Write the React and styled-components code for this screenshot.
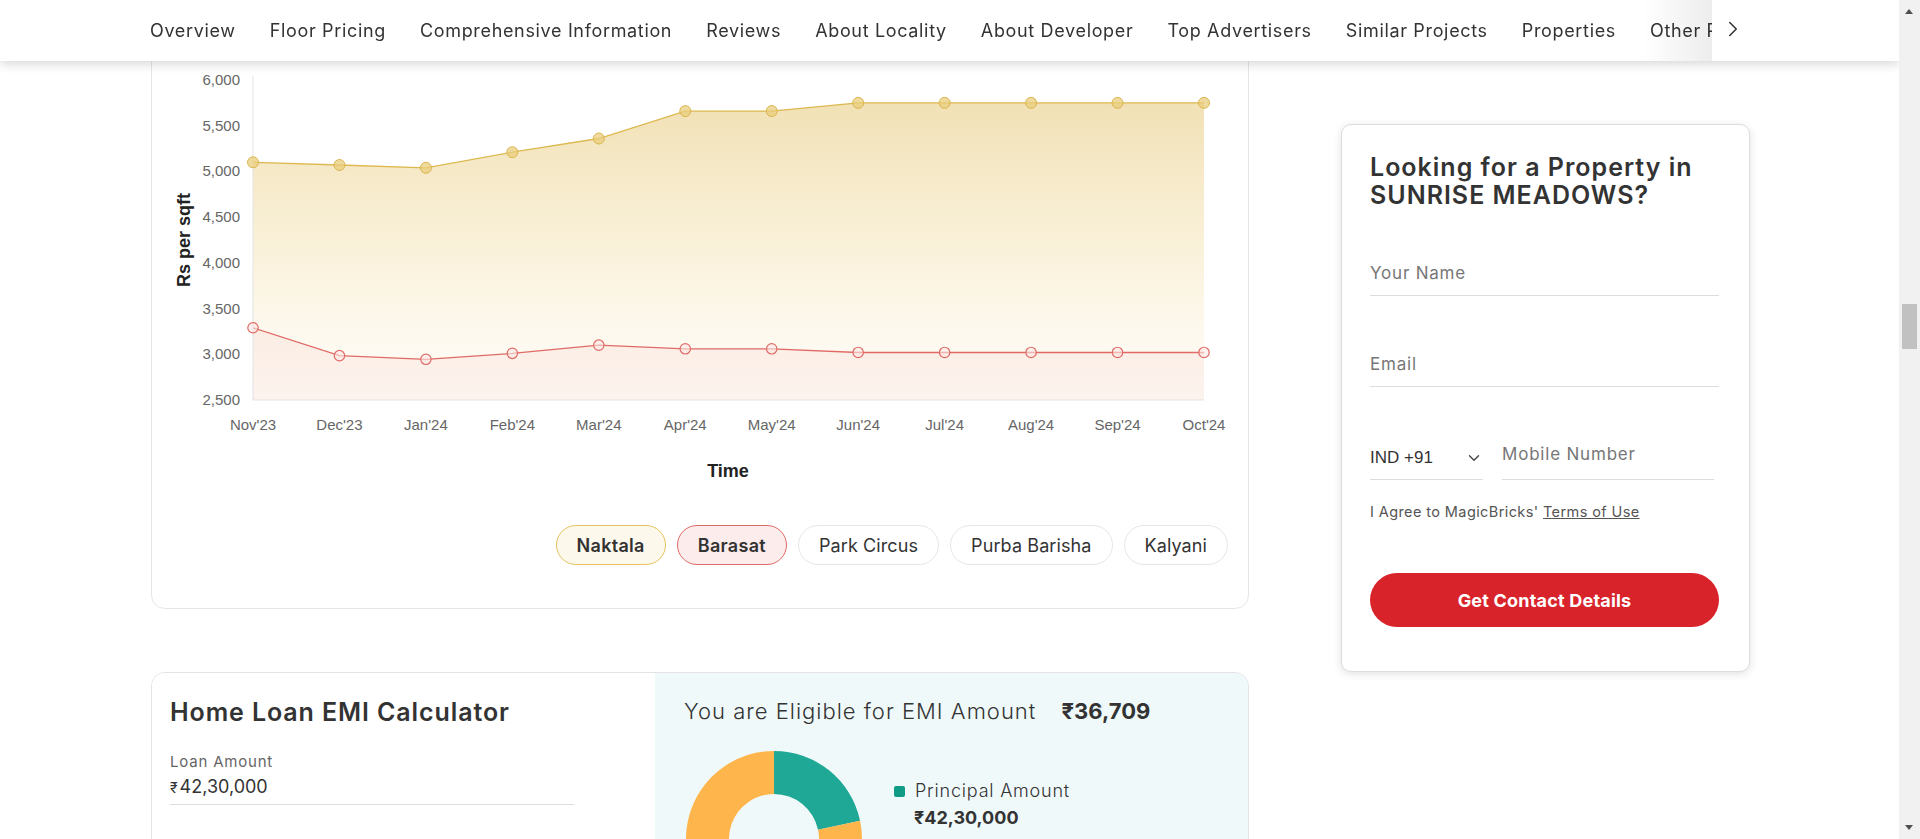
import React from 'react';
import styled, { createGlobalStyle } from 'styled-components';
import { ChevronRight, ChevronDown } from 'lucide-react';

const GlobalStyle = createGlobalStyle`
  * { box-sizing: border-box; }
  html, body { margin: 0; padding: 0; background: #fff; }
  body { font-family: Inter, "Open Sans", sans-serif; color: #333; }
`;

const navLinks = [
  'Overview', 'Floor Pricing', 'Comprehensive Information', 'Reviews', 'About Locality',
  'About Developer', 'Top Advertisers', 'Similar Projects', 'Properties', 'Other Projects',
];

const months = ["Nov'23", "Dec'23", "Jan'24", "Feb'24", "Mar'24", "Apr'24", "May'24", "Jun'24", "Jul'24", "Aug'24", "Sep'24", "Oct'24"];
const naktala = [5100, 5070, 5040, 5210, 5360, 5660, 5660, 5750, 5750, 5750, 5750, 5750];
const barasat = [3290, 2985, 2945, 3010, 3100, 3060, 3060, 3020, 3020, 3020, 3020, 3020];
const ticks = [6000, 5500, 5000, 4500, 4000, 3500, 3000, 2500];

const localities = [
  { name: 'Naktala', tone: 'yellow' },
  { name: 'Barasat', tone: 'red' },
  { name: 'Park Circus' },
  { name: 'Purba Barisha' },
  { name: 'Kalyani' },
];

// chart geometry (svg coords)
const X0 = 101;
const X1 = 1052;
const Y0 = 69;
const Y1 = 389;
const px = (i) => X0 + (i * (X1 - X0)) / (months.length - 1);
const py = (v) => Y0 + ((6000 - v) / 3500) * (Y1 - Y0);

const linePath = (data) => data.map((v, i) => `${i ? 'L' : 'M'}${px(i).toFixed(1)},${py(v).toFixed(1)}`).join(' ');
const areaPath = (data) => `${linePath(data)} L${X1},${Y1} L${X0},${Y1} Z`;

const polar = (cx, cy, r, a) => {
  const rad = (a * Math.PI) / 180;
  return [cx + r * Math.sin(rad), cy - r * Math.cos(rad)];
};
const slice = (cx, cy, r, R, a0, a1) => {
  const large = a1 - a0 > 180 ? 1 : 0;
  const [ox0, oy0] = polar(cx, cy, R, a0);
  const [ox1, oy1] = polar(cx, cy, R, a1);
  const [ix1, iy1] = polar(cx, cy, r, a1);
  const [ix0, iy0] = polar(cx, cy, r, a0);
  return `M${ox0},${oy0} A${R},${R} 0 ${large} 1 ${ox1},${oy1} L${ix1},${iy1} A${r},${r} 0 ${large} 0 ${ix0},${iy0} Z`;
};

function App() {
  return (
    <>
      <GlobalStyle />
      <Nav>
        <NavList>
          {navLinks.map((l) => (
            <NavItem key={l} href="#">{l}</NavItem>
          ))}
        </NavList>
        <NavArrow>
          <ChevronRight size={26} strokeWidth={1.4} color="#333" />
        </NavArrow>
      </Nav>

      <Page>
        <LeftCol>
          <ChartCard>
            <svg width="1096" height="480" viewBox="0 0 1096 480">
              <defs>
                <linearGradient id="gy" x1="0" y1={Y0} x2="0" y2={Y1} gradientUnits="userSpaceOnUse">
                  <stop offset="0" stopColor="#efdcaa" stopOpacity="0.95" />
                  <stop offset="0.55" stopColor="#f8eccc" stopOpacity="0.7" />
                  <stop offset="1" stopColor="#fffaf0" stopOpacity="0.4" />
                </linearGradient>
                <linearGradient id="gr" x1="0" y1="250" x2="0" y2={Y1} gradientUnits="userSpaceOnUse">
                  <stop offset="0" stopColor="#f3c6c0" stopOpacity="0.3" />
                  <stop offset="1" stopColor="#f7dcd6" stopOpacity="0.3" />
                </linearGradient>
              </defs>
              {ticks.map((t) => (
                <AxisText key={t} x="88" y={py(t) + 5} textAnchor="end">{t.toLocaleString('en-US')}</AxisText>
              ))}
              {months.map((m, i) => (
                <AxisText key={m} x={px(i)} y="419" textAnchor="middle">{m}</AxisText>
              ))}
              <AxisTitle x="32" y="229" textAnchor="middle" dominantBaseline="central" transform="rotate(-90 32 229)">Rs per sqft</AxisTitle>
              <AxisTitle x="576" y="466" textAnchor="middle">Time</AxisTitle>

              <path d={areaPath(naktala)} fill="url(#gy)" />
              <path d={areaPath(barasat)} fill="url(#gr)" />
              <line x1={X0} y1={Y0 - 4} x2={X0} y2={Y1} stroke="#e3e3e3" />
              <line x1={X0} y1={Y1} x2={X1} y2={Y1} stroke="#e3e3e3" />
              <path d={linePath(naktala)} fill="none" stroke="#ddb84e" strokeWidth="1.3" />
              <path d={linePath(barasat)} fill="none" stroke="#e06a66" strokeWidth="1.3" />
              {naktala.map((v, i) => (
                <circle key={`n${i}`} cx={px(i)} cy={py(v)} r="5.5" fill="#e9cd7c" fillOpacity="0.75" stroke="#dbb54c" strokeWidth="1" />
              ))}
              {barasat.map((v, i) => (
                <circle key={`b${i}`} cx={px(i)} cy={py(v)} r="5.2" fill="#fbe7e4" fillOpacity="0.6" stroke="#e06a66" strokeWidth="1.2" />
              ))}
            </svg>
            <Chips>
              {localities.map((l) => (
                <Chip key={l.name} $tone={l.tone}>{l.name}</Chip>
              ))}
            </Chips>
          </ChartCard>

          <EmiCard>
            <EmiLeft>
              <EmiTitle>Home Loan EMI Calculator</EmiTitle>
              <FieldLabel>Loan Amount</FieldLabel>
              <AmountInput>
                <Rupee>₹</Rupee>42,30,000
              </AmountInput>
            </EmiLeft>
            <EmiRight>
              <Eligible>
                You are Eligible for EMI Amount <strong>₹36,709</strong>
              </Eligible>
              <DonutRow>
                <svg width="180" height="180" viewBox="0 0 180 180">
                  <path d={slice(90, 90, 45, 88, 0, 78)} fill="#1fa896" />
                  <path d={slice(90, 90, 45, 88, 78, 220)} fill="#feb54c" />
                  <path d={slice(90, 90, 45, 88, 220, 360)} fill="#feb54c" />
                </svg>
                <Legend>
                  <LegendLabel>
                    <Swatch $color="#0f9b86" />
                    Principal Amount
                  </LegendLabel>
                  <LegendValue>₹42,30,000</LegendValue>
                </Legend>
              </DonutRow>
            </EmiRight>
          </EmiCard>
        </LeftCol>

        <RightCol>
          <FormCard>
            <FormTitle>Looking for a Property in SUNRISE MEADOWS?</FormTitle>
            <Field $top={45}>Your Name</Field>
            <Field $top={49}>Email</Field>
            <PhoneRow>
              <CountrySelect>
                IND +91
                <ChevronDown size={18} strokeWidth={1.8} color="#444" />
              </CountrySelect>
              <MobileField>Mobile Number</MobileField>
            </PhoneRow>
            <Agree>
              I Agree to MagicBricks' <a href="#">Terms of Use</a>
            </Agree>
            <SubmitButton>Get Contact Details</SubmitButton>
          </FormCard>
        </RightCol>
      </Page>

      <ScrollTrack>
        <ScrollArrow $dir="up" />
        <ScrollThumb />
        <ScrollArrow $dir="down" />
      </ScrollTrack>
    </>
  );
}

export default App;

const Nav = styled.nav`
  position: fixed;
  top: 0;
  left: 0;
  right: 21px;
  height: 61px;
  background: #fff;
  box-shadow: 0 3px 10px rgba(0, 0, 0, 0.16);
  z-index: 10;
  display: flex;
  align-items: stretch;
  padding-left: 150px;
`;

const NavList = styled.div`
  flex: 1;
  display: flex;
  align-items: center;
  gap: 34px;
  white-space: nowrap;
  overflow: hidden;
`;

const NavItem = styled.a`
  font-size: 18px;
  letter-spacing: 0.66px;
  color: #333;
  text-decoration: none;
`;

const NavArrow = styled.div`
  position: relative;
  width: 187px;
  flex-shrink: 0;
  background: #fff;
  display: flex;
  align-items: center;
  padding-left: 8px;
  padding-bottom: 4px;

  &::before {
    content: '';
    position: absolute;
    left: -70px;
    top: 0;
    bottom: 0;
    width: 70px;
    background: linear-gradient(to right, rgba(0, 0, 0, 0), rgba(0, 0, 0, 0.07));
  }
`;

const ScrollTrack = styled.div`
  position: fixed;
  top: 0;
  right: 0;
  bottom: 0;
  width: 21px;
  background: #f1f1f1;
  z-index: 20;
`;

const ScrollArrow = styled.span`
  position: absolute;
  left: 6px;
  width: 0;
  height: 0;
  border-left: 4.5px solid transparent;
  border-right: 4.5px solid transparent;
  ${({ $dir }) =>
    $dir === 'up'
      ? 'top: 9px; border-bottom: 5px solid #505050;'
      : 'bottom: 9px; border-top: 5px solid #505050;'}
`;

const ScrollThumb = styled.span`
  position: absolute;
  top: 304px;
  left: 3px;
  width: 15px;
  height: 45px;
  background: #c1c1c1;
`;

const Page = styled.div`
  display: flex;
  gap: 92px;
  padding-left: 151px;
  padding-bottom: 200px;
`;

const LeftCol = styled.div`
  width: 1098px;
  padding-top: 10px;
  display: flex;
  flex-direction: column;
  gap: 63px;
`;

const RightCol = styled.div`
  width: 409px;
  padding-top: 124px;
`;

const ChartCard = styled.section`
  border: 1px solid #e6e6e6;
  border-radius: 14px;
  padding-bottom: 43px;

  svg {
    display: block;
  }
`;

const AxisText = styled.text`
  font-family: 'Liberation Sans', Arial, sans-serif;
  font-size: 15px;
  fill: #666;
`;

const AxisTitle = styled.text`
  font-family: 'Liberation Sans', Arial, sans-serif;
  font-size: 18px;
  font-weight: bold;
  fill: #222;
`;

const Chips = styled.div`
  margin-top: 34px;
  display: flex;
  justify-content: flex-end;
  gap: 11px;
  padding-right: 20px;
`;

const chipTones = {
  yellow: { bg: '#fcf8ec', border: '#e4c35c', weight: 600 },
  red: { bg: '#fcecec', border: '#e06a66', weight: 600 },
};

const Chip = styled.button`
  height: 40px;
  padding: 0 20px;
  border-radius: 20px;
  font-family: inherit;
  font-size: 18px;
  color: #333;
  cursor: pointer;
  background: ${({ $tone }) => (chipTones[$tone] ? chipTones[$tone].bg : '#fff')};
  border: 1px solid ${({ $tone }) => (chipTones[$tone] ? chipTones[$tone].border : '#e6e6e6')};
  font-weight: ${({ $tone }) => (chipTones[$tone] ? chipTones[$tone].weight : 400)};
  letter-spacing: ${({ $tone }) => (chipTones[$tone] ? '0.3px' : '0.1px')};
`;

const EmiCard = styled.section`
  display: grid;
  grid-template-columns: 503px 1fr;
  height: 420px;
  border: 1px solid #e3e3e3;
  border-radius: 14px;
  overflow: hidden;
`;

const EmiLeft = styled.div`
  padding: 24px 18px;
  background: #fff;
`;

const EmiTitle = styled.h2`
  margin: 0;
  font-size: 25px;
  line-height: 30px;
  font-weight: 600;
  letter-spacing: 0.9px;
  color: #333;
`;

const FieldLabel = styled.div`
  margin-top: 25px;
  font-size: 15px;
  line-height: 20px;
  letter-spacing: 0.8px;
  color: #666;
`;

const AmountInput = styled.div`
  margin-top: 3px;
  width: 404px;
  padding-bottom: 4px;
  border-bottom: 1px solid #ddd;
  font-size: 18px;
  line-height: 24px;
  color: #333;
`;

const Rupee = styled.span`
  font-size: 14px;
  margin-right: 2px;
`;

const EmiRight = styled.div`
  padding: 23px 29px;
  background: #f0f9fa;
`;

const Eligible = styled.div`
  font-size: 22px;
  line-height: 30px;
  font-weight: 300;
  letter-spacing: 1px;
  color: #333;

  strong {
    margin-left: 18px;
    font-weight: 700;
    letter-spacing: 0;
  }
`;

const DonutRow = styled.div`
  margin-top: 23px;
  display: flex;
  align-items: flex-start;
  gap: 30px;
`;

const Legend = styled.div`
  margin-top: 30px;
`;

const LegendLabel = styled.div`
  display: flex;
  align-items: center;
  gap: 10px;
  font-size: 18px;
  line-height: 24px;
  font-weight: 300;
  letter-spacing: 0.8px;
  color: #333;
`;

const Swatch = styled.span`
  width: 11px;
  height: 11px;
  border-radius: 2px;
  background: ${({ $color }) => $color};
`;

const LegendValue = styled.div`
  margin-top: 3px;
  padding-left: 20px;
  font-size: 18px;
  line-height: 24px;
  font-weight: 700;
  color: #333;
`;

const FormCard = styled.aside`
  border: 1px solid #ddd;
  border-radius: 10px;
  box-shadow: 0 2px 8px rgba(0, 0, 0, 0.12);
  padding: 28px 30px 44px 28px;
  background: #fff;
`;

const FormTitle = styled.h3`
  margin: 0;
  font-size: 25px;
  line-height: 28px;
  font-weight: 600;
  letter-spacing: 1px;
  color: #333;
`;

const Field = styled.div`
  margin-top: ${({ $top }) => $top}px;
  padding: 8px 0 11px;
  border-bottom: 1px solid #ddd;
  font-size: 17px;
  line-height: 22px;
  letter-spacing: 0.8px;
  color: #777;
`;

const PhoneRow = styled.div`
  margin-top: 51px;
  display: flex;
  gap: 19px;
`;

const CountrySelect = styled.div`
  width: 113px;
  display: flex;
  align-items: center;
  justify-content: space-between;
  padding: 9px 0 10px;
  border-bottom: 1px solid #ddd;
  font-family: 'Liberation Sans', Arial, sans-serif;
  font-size: 17px;
  line-height: 22px;
  color: #333;
`;

const MobileField = styled.div`
  width: 212px;
  padding: 5px 0 14px;
  border-bottom: 1px solid #ddd;
  font-size: 17px;
  line-height: 22px;
  letter-spacing: 0.8px;
  color: #777;
`;

const Agree = styled.p`
  margin: 23px 0 0;
  font-size: 14.5px;
  line-height: 18px;
  letter-spacing: 0.4px;
  color: #555;

  a {
    color: #555;
  }
`;

const SubmitButton = styled.button`
  margin-top: 52px;
  width: 100%;
  height: 54px;
  border: none;
  border-radius: 27px;
  background: #d8232a;
  color: #fff;
  font-family: inherit;
  font-size: 18px;
  font-weight: 700;
  letter-spacing: 0.2px;
  cursor: pointer;
`;
